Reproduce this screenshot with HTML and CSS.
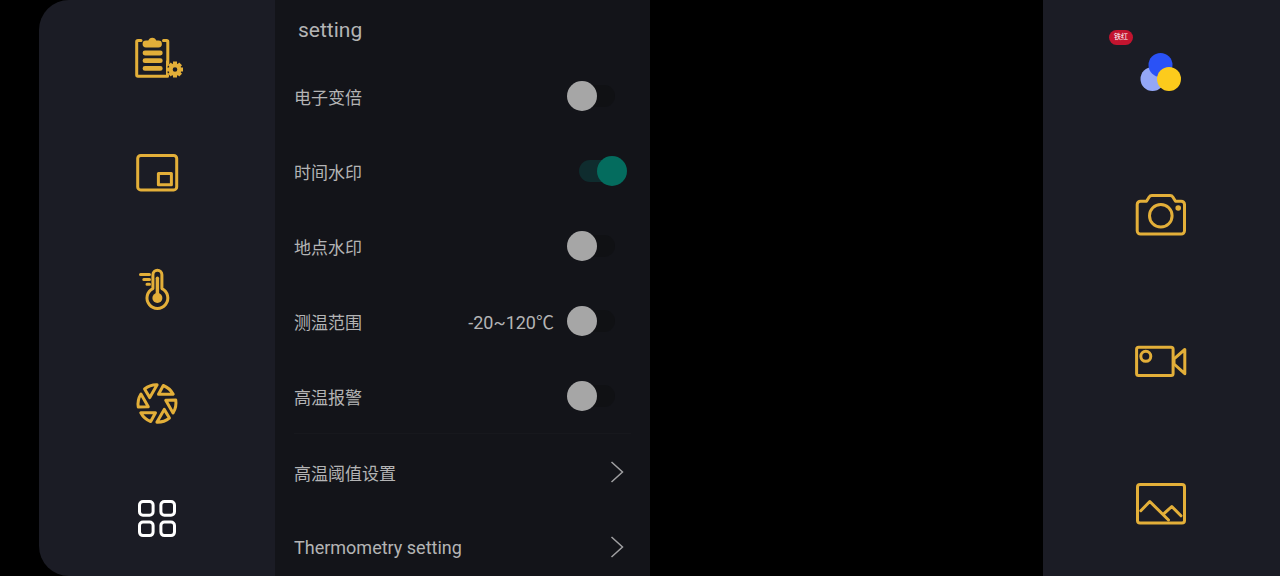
FILE: index.html
```html
<!DOCTYPE html>
<html lang="zh-CN">
<head>
<meta charset="utf-8">
<meta name="viewport" content="width=device-width, initial-scale=1">
<title>setting</title>
<link rel="stylesheet" href="styles.css">
</head>
<body>
<div class="app">
  <nav class="rail rail-left" aria-label="Tools">
    <div class="slot"><button class="tool" aria-label="Report settings">
      <svg class="icon" viewBox="0 0 60 60">
        <path d="M14 12.500H11a1.300 1.300 0 0 0-1.300 1.300V47a1.300 1.300 0 0 0 1.300 1.300H40.500V33M36.500 12.500H39.500a1.300 1.300 0 0 1 1.300 1.300V36"/>
        <path class="solid" d="M21.300 12.600a4.200 4.200 0 0 1 8 0H31.500a3.300 3.300 0 0 1 0 6.800H19a3.300 3.300 0 0 1 0-6.800z"/>
        <path class="bars" d="M18 25H33.300M18 32.700H33.300M18 40.400H33.300"/>
        <circle class="gap" cx="48" cy="41.500" r="8"/>
        <g transform="translate(48 41.500)">
          <circle class="gear" r="4.300"/>
          <path class="teeth" d="M0-5V-8M0 5V8M-5 0H-8M5 0H8M-3.700-3.700-5.600-5.600M3.700-3.700 5.600-5.600M-3.700 3.700-5.600 5.600M3.700 3.700 5.600 5.600"/>
        </g>
      </svg></button></div>
    <div class="slot"><button class="tool" aria-label="Picture in picture">
      <svg class="icon" viewBox="0 0 60 60">
        <rect x="10.700" y="12.400" width="39" height="34.500" rx="3"/>
        <rect x="31.400" y="30.400" width="13" height="11.400"/>
      </svg></button></div>
    <div class="slot"><button class="tool" aria-label="Temperature">
      <svg class="icon" viewBox="0 0 60 60">
        <path d="M25.900 30.600V16.800a4.500 4.500 0 0 1 9 0V30.600a10.400 10.400 0 1 1-9 0z"/>
        <path class="mercury" d="M30.400 20.300V40"/>
        <circle class="solid" cx="30.400" cy="40" r="5"/>
        <path d="M13.500 16.500H22.500M16.800 21.500H22.500M20 26.300H22.500"/>
      </svg></button></div>
    <div class="slot"><button class="tool" aria-label="Aperture">
      <svg class="icon" viewBox="0 0 60 60">
        <defs><path id="blade" d="M6.300-18A19 19 0 0 1 16.200-9.200H1.500z"/></defs>
        <g transform="translate(30 30.500)">
          <use href="#blade"/>
          <use href="#blade" transform="rotate(60)"/>
          <use href="#blade" transform="rotate(120)"/>
          <use href="#blade" transform="rotate(180)"/>
          <use href="#blade" transform="rotate(240)"/>
          <use href="#blade" transform="rotate(300)"/>
        </g>
      </svg></button></div>
    <div class="slot"><button class="tool active" aria-label="More settings" aria-pressed="true">
      <svg class="icon" viewBox="0 0 60 60">
        <rect x="12.500" y="13.600" width="13.600" height="13.600" rx="3.500"/>
        <rect x="33.900" y="13.600" width="13.600" height="13.600" rx="3.500"/>
        <rect x="12.500" y="34" width="13.600" height="13.600" rx="3.500"/>
        <rect x="33.900" y="34" width="13.600" height="13.600" rx="3.500"/>
      </svg></button></div>
  </nav>

  <main class="panel">
    <h1 class="title">setting</h1>
    <div class="row"><label class="name" for="zoom">电子变倍</label><input class="switch" type="checkbox" role="switch" id="zoom"></div>
    <div class="row"><label class="name" for="time">时间水印</label><input class="switch" type="checkbox" role="switch" id="time" checked></div>
    <div class="row"><label class="name" for="place">地点水印</label><input class="switch" type="checkbox" role="switch" id="place"></div>
    <div class="row"><label class="name" for="range">测温范围</label><span class="value">-20~120℃</span><input class="switch" type="checkbox" role="switch" id="range"></div>
    <div class="row"><label class="name" for="alarm">高温报警</label><input class="switch" type="checkbox" role="switch" id="alarm"></div>
    <hr class="divider">
    <button class="row link"><span class="name">高温阈值设置</span><svg class="chevron" viewBox="0 0 14 22"><path d="M1.500 1 12.500 11 1.500 21"/></svg></button>
    <button class="row link"><span class="name latin">Thermometry setting</span><svg class="chevron" viewBox="0 0 14 22"><path d="M1.500 1 12.500 11 1.500 21"/></svg></button>
  </main>

  <div class="view"></div>

  <nav class="rail rail-right" aria-label="Capture">
    <div class="slot"><button class="tool" aria-label="铁红">
      <svg class="icon" viewBox="0 0 60 60">
        <circle class="dot-light" cx="21.500" cy="37" r="12"/>
        <circle class="dot-blue" cx="29.500" cy="23" r="12"/>
        <circle class="dot-yellow" cx="38" cy="37" r="12"/>
      </svg><span class="badge">铁红</span></button></div>
    <div class="slot"><button class="tool" aria-label="Take photo">
      <svg class="icon" viewBox="0 0 60 60">
        <path d="M9.500 15.200H15.500L18 11.200Q19 9.600 20.800 9.600H39.200Q41 9.600 42 11.200L44.500 15.200H50.200a3.300 3.300 0 0 1 3.300 3.300V44.800a3.300 3.300 0 0 1-3.300 3.300H9.500a3.300 3.300 0 0 1-3.300-3.300V18.500a3.300 3.300 0 0 1 3.300-3.300z"/>
        <circle cx="29.800" cy="29.700" r="11.300"/>
        <circle class="solid" cx="47.200" cy="22" r="2.800"/>
      </svg></button></div>
    <div class="slot"><button class="tool" aria-label="Record video">
      <svg class="icon" viewBox="0 0 60 60">
        <rect x="5.600" y="17.200" width="36.500" height="28.200" rx="2"/>
        <circle cx="14.800" cy="26.300" r="5"/>
        <path d="M43 28.800 53.800 19.500V43.700L43 34z"/>
      </svg></button></div>
    <div class="slot"><button class="tool" aria-label="Gallery">
      <svg class="icon" viewBox="0 0 60 60">
        <rect x="6.500" y="10.500" width="47" height="38.500" rx="2.500"/>
        <path d="M9.800 36.700 18.800 27.500 37.500 46M33.200 39.300 40.800 32.500 50 41.800"/>
      </svg></button></div>
  </nav>
</div>
</body>
</html>
```

FILE: styles.css
```css
* {
  box-sizing: border-box;
}

body {
  margin: 0;
  background: #000;
  color: #b4b4b5;
  font-family: Roboto, "Noto Sans CJK SC", sans-serif;
}

button {
  padding: 0;
  border: 0;
  background: none;
  color: inherit;
  font: inherit;
  cursor: pointer;
}

.app {
  display: flex;
  height: 100vh;
  padding-left: 39px;
}

.rail {
  display: flex;
  flex-direction: column;
  background: #1b1c25;
}

.rail-left {
  flex: 0 0 236px;
  border-radius: 30px 0 0 30px;
}

.rail-right {
  flex: 0 0 237px;
  padding-right: 1px;
}

.slot {
  display: flex;
  flex: 1;
  align-items: center;
  justify-content: center;
}

.tool {
  position: relative;
  color: #e3af39;
}

.tool.active {
  color: #fff;
}

.icon {
  display: block;
  width: 60px;
  height: 60px;
  fill: none;
  stroke: currentColor;
  stroke-width: 3;
  stroke-linecap: round;
  stroke-linejoin: round;
}

.solid {
  fill: currentColor;
  stroke: none;
}

.bars {
  stroke-width: 4.8;
}

.gap {
  fill: #1b1c25;
  stroke: none;
}

.gear {
  stroke-width: 4;
}

.teeth {
  stroke-width: 4;
  stroke-linecap: butt;
}

.mercury {
  stroke-width: 3.4;
}

.dot-light,
.dot-blue,
.dot-yellow {
  stroke: none;
}

.dot-light {
  fill: #94a7f7;
}

.dot-blue {
  fill: #2a52f6;
}

.dot-yellow {
  fill: #fccb1c;
}

.badge {
  position: absolute;
  top: -12px;
  left: -22px;
  width: 24px;
  border-radius: 8px;
  background: #c3142f;
  color: #fff;
  font-size: 7px;
  line-height: 15px;
  text-align: center;
}

.panel {
  flex: 0 0 375px;
  overflow: hidden auto;
  scrollbar-width: none;
  background: #131419;
}

.title {
  margin: 0;
  padding: 0 23px;
  font-size: 21px;
  font-weight: 400;
  line-height: 60px;
  height: 58px;
}

.row {
  display: flex;
  align-items: center;
  width: 100%;
  height: 75px;
  padding: 0 23px 0 19px;
  font-size: 17px;
  text-align: left;
}

.row.link {
  padding-right: 26px;
  font-size: 17px;
}

.name {
  flex: 1;
  padding-top: 1px;
}

.name.latin {
  font-size: 18px;
}

.value {
  margin-right: 13px;
  font-size: 18px;
}

.switch {
  position: relative;
  flex: none;
  width: 60px;
  height: 30px;
  margin: 0;
  appearance: none;
  cursor: pointer;
}

.switch::before {
  content: "";
  position: absolute;
  top: 4px;
  left: 12px;
  width: 36px;
  height: 22px;
  border-radius: 11px;
  background: #101114;
}

.switch::after {
  content: "";
  position: absolute;
  top: 0;
  left: 0;
  width: 30px;
  height: 30px;
  border-radius: 50%;
  background: #a6a6a6;
}

.switch:checked::before {
  background: #0f2c2e;
}

.switch:checked::after {
  left: 30px;
  background: #046c5e;
}

.divider {
  height: 1px;
  margin: 0 19px;
  border: 0;
  background: #17181d;
}

.chevron {
  width: 14px;
  height: 22px;
  fill: none;
  stroke: #a0a0a2;
  stroke-width: 1.5;
}

.view {
  flex: 1;
}
```
